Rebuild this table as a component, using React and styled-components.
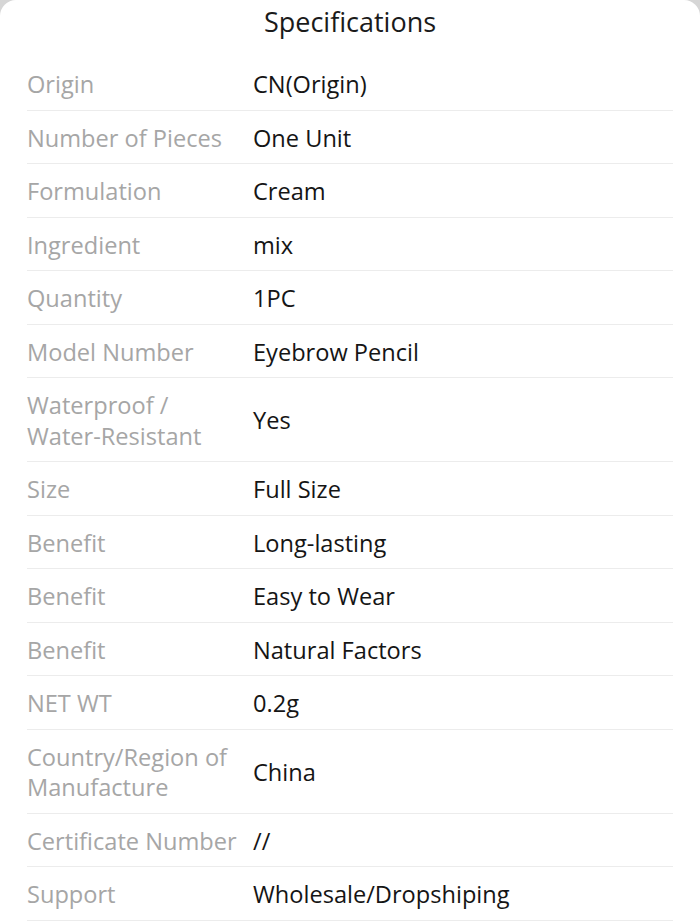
import React from "react";
import styled, { createGlobalStyle } from "styled-components";

const GlobalStyle = createGlobalStyle`
    html, body {
        margin: 0;
        padding: 0;
        background: #d6d6d6;
    }
    body {
        font-family: "Open Sans", "Noto Sans", sans-serif;
    }
`

const specs = [
    ["Origin", "CN(Origin)"],
    ["Number of Pieces", "One Unit"],
    ["Formulation", "Cream"],
    ["Ingredient", "mix"],
    ["Quantity", "1PC"],
    ["Model Number", "Eyebrow Pencil"],
    ["Waterproof /\nWater-Resistant", "Yes"],
    ["Size", "Full Size"],
    ["Benefit", "Long-lasting"],
    ["Benefit", "Easy to Wear"],
    ["Benefit", "Natural Factors"],
    ["NET WT", "0.2g"],
    ["Country/Region of\nManufacture", "China"],
    ["Certificate Number", "//"],
    ["Support", "Wholesale/Dropshiping"],
];

function App() {
    return (
        <>
            <GlobalStyle />
            <Sheet>
                <Title>Specifications</Title>
                <List>
                    {specs.map(([label, value], i) => (
                        <Row key={i}>
                            <Label>{label}</Label>
                            <Value>{value}</Value>
                        </Row>
                    ))}
                </List>
            </Sheet>
        </>
    );
}

export default App;

const Sheet = styled.div`
    background: #fff;
    border-radius: 16px 16px 0 0;
    min-height: 921px;
    box-sizing: border-box;
`

const Title = styled.h2`
    margin: 0;
    padding: 6px 0 19px;
    line-height: 32px;
    font-size: 27px;
    font-weight: 400;
    text-align: center;
    color: #1a1a1a;
`

const List = styled.div`
    padding: 0 27px;
`

const Row = styled.div`
    display: grid;
    grid-template-columns: 226px 1fr;
    align-items: center;
    padding: 12px 0 10px;
    border-bottom: 1px solid #ececec;
    font-size: 23.6px;
    line-height: 30.5px;
`

const Label = styled.div`
    color: #a6a6a6;
    white-space: pre-line;
    padding-right: 4px;
`

const Value = styled.div`
    color: #151515;
`
